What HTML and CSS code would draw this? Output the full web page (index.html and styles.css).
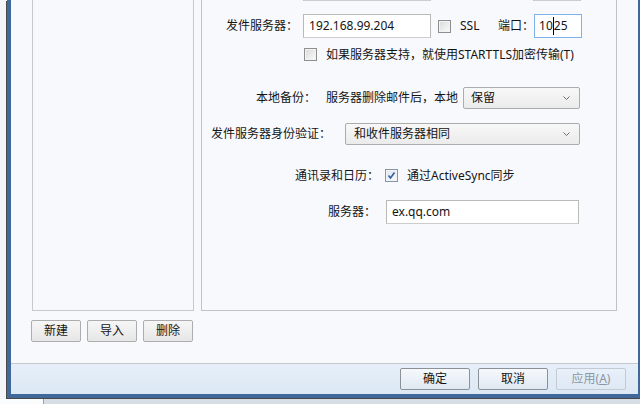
FILE: index.html
```html
<!DOCTYPE html>
<html lang="zh-CN">
<head>
  <meta charset="UTF-8" />
  <title>账户设置</title>
  <link rel="stylesheet" href="styles.css">
</head>
<body>

  <div class="window">
    <div class="dlg-body">
      <div class="panes">
        <div class="account-list"></div>

        <div class="settings">
          <!-- only the lower edge of the incoming server row is on screen -->
          <div class="row row-recv">
            <div class="textbox host"></div>
            <div class="textbox port"></div>
          </div>

          <div class="row row-send">
            <span class="lbl">发件服务器：</span>
            <div class="textbox host">192.168.99.204</div>
            <span class="check"></span>
            <span class="ssl">SSL</span>
            <span class="lbl">端口：</span>
            <div class="textbox port focus">10<span class="caret"></span>25</div>
          </div>

          <div class="row row-tls">
            <span class="check"></span>
            <span class="check-text">如果服务器支持，就使用STARTTLS加密传输(T)</span>
          </div>

          <div class="row row-backup">
            <span class="lbl">本地备份：</span>
            <span class="hint">服务器删除邮件后，本地</span>
            <div class="combo keep">
              <span>保留</span>
              <svg width="7" height="4" viewBox="0 0 7 4"><polyline points="0.5,0.5 3.5,3.5 6.5,0.5" fill="none" stroke="#6b6b6b" stroke-width="1"/></svg>
            </div>
          </div>

          <div class="row row-auth">
            <span class="lbl">发件服务器身份验证：</span>
            <div class="combo auth">
              <span>和收件服务器相同</span>
              <svg width="7" height="4" viewBox="0 0 7 4"><polyline points="0.5,0.5 3.5,3.5 6.5,0.5" fill="none" stroke="#6b6b6b" stroke-width="1"/></svg>
            </div>
          </div>

          <div class="row row-sync">
            <span class="lbl">通讯录和日历：</span>
            <span class="check checked">
              <svg width="11" height="11" viewBox="0 0 11 11"><polyline points="2.5,5.5 4.5,8 8.5,2.5" fill="none" stroke="#2d5f9e" stroke-width="1.6"/></svg>
            </span>
            <span class="check-text">通过ActiveSync同步</span>
          </div>

          <div class="row row-server">
            <span class="lbl">服务器：</span>
            <div class="textbox server">ex.qq.com</div>
          </div>
        </div>
      </div>

      <div class="list-btns">
        <button class="btn">新建</button>
        <button class="btn">导入</button>
        <button class="btn">删除</button>
      </div>
    </div>

    <div class="dlg-foot">
      <button class="btn btn-foot">确定</button>
      <button class="btn btn-foot">取消</button>
      <button class="btn btn-foot" disabled>应用(<u>A</u>)</button>
    </div>
  </div>

  <div class="taskbar">
    <div class="taskbar-gap"></div>
    <div class="taskbar-item"></div>
  </div>

</body>
</html>
```

FILE: styles.css
```css
html, body {
  margin: 0;
  height: 404px;
  overflow: hidden;
}

body {
  font-family: "Noto Sans", "Noto Sans CJK SC", sans-serif;
  font-size: 12px;
  line-height: 16px;
  color: #141414;
  background: #f3f5f8;
}

.window {
  width: 627px;
  margin-left: 7px;
  border: 4px solid #41689a;
  border-top: none;
  box-shadow: -1px 1px 0 #4a4a4a;
}

.dlg-body {
  height: 363px;
  box-sizing: border-box;
  padding: 0 21px;
  background: #f8f9fc;
  display: flex;
  flex-direction: column;
}

.panes {
  display: flex;
  gap: 7px;
  height: 311px;
}

.account-list,
.settings {
  box-sizing: border-box;
  border: 1px solid #c9c9c9;
  border-top: none;
}

.account-list {
  width: 162px;
}

.settings {
  width: 416px;
  border-color: #c2c2c2;
}

/* rows of the settings pane */
.row {
  display: flex;
  align-items: center;
  white-space: nowrap;
}

.row-recv {
  margin-top: -22px;
  padding-left: 96px;
  height: 23px;
}

.row-recv .port {
  margin-left: 102px;
  height: 23px;
}

.row-recv .host {
  height: 23px;
}

.row-send {
  margin-top: 13px;
  padding-left: 24px;
  height: 24px;
}

.row-tls {
  margin-top: 10px;
  padding-left: 102px;
  height: 13px;
}

.row-backup {
  margin-top: 26px;
  padding-left: 54px;
  height: 22px;
}

.row-auth {
  margin-top: 14px;
  padding-left: 9px;
  height: 22px;
}

.row-sync {
  margin-top: 24px;
  padding-left: 93px;
  height: 13px;
}

.row-server {
  margin-top: 18px;
  padding-left: 126px;
  height: 24px;
}

.textbox {
  box-sizing: border-box;
  height: 24px;
  border: 1px solid #b9b9b9;
  border-bottom-color: #cdcdcd;
  background: #fff;
  padding: 0 5px;
  display: flex;
  align-items: center;
}

.textbox.host {
  width: 128px;
  margin-left: 5px;
}

.textbox.port {
  width: 48px;
  padding-left: 4px;
}

.textbox.focus {
  border-color: #7eb4ea;
}

.caret {
  display: inline-block;
  width: 1px;
  height: 18px;
  background: #000;
}

.textbox.server {
  width: 193px;
  margin-left: 10px;
}

.check {
  box-sizing: border-box;
  width: 13px;
  height: 13px;
  border: 1px solid #8e8e8e;
  background: linear-gradient(135deg, #d9d9d9, #fbfbfb);
  box-shadow: inset 0 0 0 1px #f3f3f3;
  display: flex;
  align-items: center;
  justify-content: center;
}

.check.checked {
  border-color: #8595aa;
  background: linear-gradient(135deg, #dfe7f1, #f8fafd);
}

.row-send .check {
  margin-left: 7px;
}

.row-sync .check {
  margin-left: 6px;
}

.ssl {
  width: 38px;
  margin-left: 9px;
}

.check-text {
  margin-left: 9px;
}

.hint {
  margin-left: 10px;
}

.combo {
  box-sizing: border-box;
  height: 22px;
  border: 1px solid #acacac;
  border-radius: 2px;
  background: linear-gradient(#f8f8f8, #ebebeb);
  display: flex;
  align-items: center;
  justify-content: space-between;
  padding: 0 9px 0 7px;
}

.combo.keep {
  width: 117px;
  margin-left: 5px;
}

.combo.auth {
  width: 235px;
  margin-left: 14px;
  padding-left: 8px;
}

/* buttons */
.btn {
  font: inherit;
  color: #141414;
  box-sizing: border-box;
  height: 22px;
  padding: 0;
  border: 1px solid #adadad;
  border-radius: 2px;
  background: linear-gradient(#f6f6f6, #e6e6e6);
}

.list-btns {
  display: flex;
  gap: 6px;
  margin: 9px 0 0 -1px;
}

.list-btns .btn {
  width: 50px;
}

.dlg-foot {
  height: 31px;
  box-sizing: border-box;
  border-top: 1px solid #c4c9d0;
  background: linear-gradient(#e6eff9, #dce8f4);
  display: flex;
  justify-content: flex-end;
  gap: 8px;
  padding: 4px 12px 0 0;
}

.btn-foot {
  width: 70px;
  border-color: #8c9198;
  background: linear-gradient(#f6f9fc, #dfe8f2);
}

.btn-foot:disabled {
  color: #8d97a2;
  border-color: #c3cad3;
  background: linear-gradient(#e8f0f9, #dfe9f4);
}

.taskbar {
  display: flex;
  height: 5px;
  margin-top: 1px;
}

.taskbar-gap {
  width: 43px;
  background: #fbfcfd;
}

.taskbar-item {
  flex: 1;
  border-left: 1px solid #9ba4ae;
  background: #d6dde5;
}
```
